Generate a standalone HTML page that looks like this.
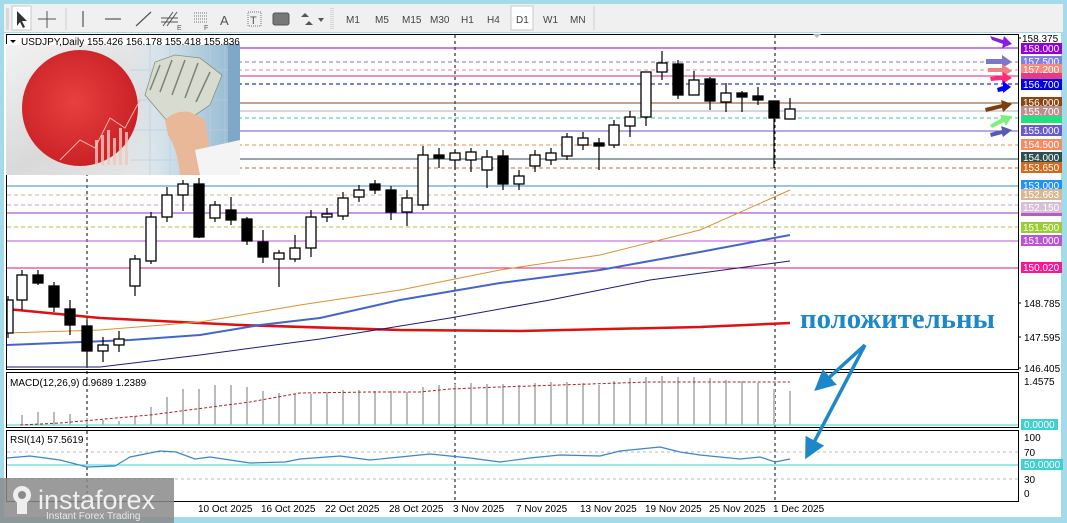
<!DOCTYPE html>
<html><head><meta charset="utf-8"><style>
html,body{margin:0;padding:0;width:1067px;height:523px;overflow:hidden;background:#a3dbe9}
svg{display:block}
text{font-family:"Liberation Sans",sans-serif}
text.ser{font-family:"Liberation Serif",serif}
</style></head><body>
<svg width="1067" height="523" viewBox="0 0 1067 523" xmlns="http://www.w3.org/2000/svg">
<defs>
<linearGradient id="flagbg" x1="0" y1="0" x2="1" y2="1"><stop offset="0" stop-color="#f2f2f2"/><stop offset="0.5" stop-color="#d9d9d9"/><stop offset="1" stop-color="#eeeeee"/></linearGradient>
<linearGradient id="rbg" x1="0" y1="0" x2="1" y2="0"><stop offset="0" stop-color="#e6eef4" stop-opacity="0"/><stop offset="0.4" stop-color="#cfe0ea"/><stop offset="1" stop-color="#8fb6cf"/></linearGradient>
<radialGradient id="red" cx="0.45" cy="0.45" r="0.6"><stop offset="0" stop-color="#e8403f"/><stop offset="1" stop-color="#c81f25"/></radialGradient>
<marker id="ah" markerWidth="6" markerHeight="6" refX="3" refY="3" orient="auto" markerUnits="strokeWidth"><path d="M0,0 L6,3 L0,6 z" fill="#1c87c9"/></marker>
</defs>
<rect x="4" y="4" width="1059" height="28" fill="#f0f0f0"/>
<rect x="6" y="8" width="3" height="22" fill="#d8d8d8"/>
<rect x="12" y="6" width="19" height="24" fill="#fff" stroke="#c8c8c8"/>
<path d="M17,11 L17,26 L20,22 L23,28 L25,27 L22,21 L27,21 z" fill="#333"/>
<path d="M47,11 V28 M38,19 H56" stroke="#555" stroke-width="1"/>
<path d="M66,8 V30" stroke="#ccc"/>
<path d="M83,11 V27" stroke="#555" stroke-width="1.2"/>
<path d="M105,19 H121" stroke="#555" stroke-width="1.2"/>
<path d="M136,26 L151,12" stroke="#555" stroke-width="1.2"/>
<path d="M163,26 L173,12 M167,26 L177,12 M161,18 H178 M161,22 H178" stroke="#555" stroke-width="1"/><text x="177" y="30" font-size="7" fill="#555">E</text>
<path d="M194,13 H208 M194,16 H208 M194,19 H208 M194,22 H208" stroke="#777" stroke-dasharray="1,1"/><text x="204" y="30" font-size="7" fill="#555">F</text>
<text x="220" y="25" font-size="13" fill="#555">A</text>
<rect x="248" y="12" width="13" height="14" fill="none" stroke="#777" stroke-dasharray="1,1"/><text x="250" y="24" font-size="11" fill="#555">T</text>
<rect x="273" y="13" width="16" height="12" rx="2" fill="#777" stroke="#555"/>
<path d="M305,13 L309,17 L301,17 z M309,21 L313,25 L305,25 z" fill="#555"/><path d="M318,18 L324,18 L321,22 z" fill="#555"/>
<path d="M331,8 V30 M333,8 V30" stroke="#bbb" stroke-dasharray="1,1"/>
<g font-size="10" fill="#444">
<text x="346" y="23">M1</text><text x="375" y="23">M5</text><text x="402" y="23">M15</text><text x="430" y="23">M30</text><text x="461" y="23">H1</text><text x="487" y="23">H4</text>
<rect x="511" y="6" width="22" height="24" fill="#fff" stroke="#c8c8c8"/><text x="516" y="23">D1</text><text x="543" y="23">W1</text><text x="570" y="23">MN</text>
</g>
<path d="M594,6 V30" stroke="#ccc"/>
<rect x="4" y="33" width="1057" height="484" fill="#fff"/>
<g fill="none" stroke="#000" stroke-width="1">
<rect x="6.5" y="34.5" width="1012" height="335"/>
<rect x="6.5" y="372.5" width="1012" height="55"/>
<rect x="6.5" y="430.5" width="1012" height="71"/>
</g>
<path d="M813,34 l4,4 l4,-4z" fill="#bbb"/>
<g stroke="#000" stroke-dasharray="3,3">
<path d="M87,35 V502 M455,35 V502 M775,35 V502"/>
</g>
<g stroke-width="1">
<path d="M7,48 H1018" stroke="#9400d3"/>
<path d="M7,62 H1018" stroke="#7b78d0" stroke-dasharray="4,3"/>
<path d="M7,70 H1018" stroke="#f08080" stroke-dasharray="4,3"/>
<path d="M7,76 H1018" stroke="#d6287a"/>
<path d="M7,84 H1018" stroke="#0000c8" stroke-dasharray="4,3"/>
<path d="M7,103 H1018" stroke="#8b4513"/>
<path d="M7,111 H1018" stroke="#bbaaaa"/>
<path d="M7,118 H1018" stroke="#2ecc8a" stroke-dasharray="4,3"/>
<path d="M7,131 H1018" stroke="#6a5acd"/>
<path d="M7,145 H1018" stroke="#e0905a" stroke-dasharray="4,3"/>
<path d="M7,159 H1018" stroke="#2f4f4f"/>
<path d="M7,168 H1018" stroke="#c07030" stroke-dasharray="4,3"/>
<path d="M7,186 H1018" stroke="#3a8ad8"/>
<path d="M7,195 H1018" stroke="#d2b48c" stroke-dasharray="4,3"/>
<path d="M7,205 H1018" stroke="#c0a0c0" stroke-dasharray="4,3"/>
<path d="M7,213 H1018" stroke="#9932cc"/>
<path d="M7,227 H1018" stroke="#b5c040" stroke-dasharray="4,3"/>
<path d="M7,241 H1018" stroke="#ba55d3"/>
<path d="M7,268 H1018" stroke="#e0157a"/>
</g>
<polyline points="7,309 100,318 240,325 400,330 520,331 700,327 790,323" fill="none" stroke="#dd1111" stroke-width="2.5"/>
<polyline points="7,333 100,330 200,322 300,305 400,290 500,270 600,255 700,230 790,190" fill="none" stroke="#e09030" stroke-width="1"/>
<polyline points="7,345 130,340 200,335 260,325 320,318 400,300 500,283 600,270 700,252 790,235" fill="none" stroke="#4466cc" stroke-width="2"/>
<polyline points="7,367 100,367 200,355 320,339 450,318 550,300 650,280 790,261" fill="none" stroke="#1a1a80" stroke-width="1"/>
<g stroke="#000" stroke-width="1.2">
<path d="M8,296V338M22,270V310M38,270V285M54,282V312M70,300V335M87,320V366M103,337V362M119,331V352M135,255V296M151,212V264M167,187V222M183,180V211M199,178V238M215,201V222M231,197V225M247,217V245M263,230V263M279,250V287M295,235V262M311,210V257M327,208V222M343,192V220M359,185V202M375,180V194M391,186V220M407,190V226M423,146V210M439,148V168M455,150V170M471,148V172M487,150V188M503,150V190M519,170V190M535,150V172M551,148V165M567,133V160M583,132V150M599,138V170M614,120V148M630,111V137M646,72V126M662,51V80M678,60V99M694,71V95M710,77V110M726,83V112M742,91V112M758,87V105M774,101V168M790,98V119"/>
</g>
<g stroke="#000" stroke-width="1.3">
<g fill="#fff">
<rect x="7" y="300" width="6" height="33"/><rect x="17" y="275" width="10" height="25"/><rect x="98" y="345" width="10" height="6"/><rect x="114" y="339" width="10" height="6"/><rect x="130" y="259" width="10" height="27"/><rect x="146" y="217" width="10" height="44"/><rect x="162" y="195" width="10" height="22"/><rect x="178" y="184" width="10" height="11"/><rect x="210" y="205" width="10" height="13"/><rect x="274" y="253" width="10" height="6"/><rect x="290" y="248" width="10" height="11"/><rect x="306" y="217" width="10" height="31"/><rect x="322" y="214" width="10" height="3"/><rect x="338" y="198" width="10" height="18"/><rect x="354" y="190" width="10" height="7"/><rect x="402" y="198" width="10" height="14"/><rect x="418" y="155" width="10" height="50"/><rect x="450" y="153" width="10" height="7"/><rect x="466" y="152" width="10" height="8"/><rect x="482" y="157" width="10" height="13"/><rect x="514" y="176" width="10" height="8"/><rect x="530" y="155" width="10" height="11"/><rect x="546" y="153" width="10" height="7"/><rect x="562" y="137" width="10" height="19"/><rect x="578" y="138" width="10" height="7"/><rect x="609" y="125" width="10" height="20"/><rect x="625" y="117" width="10" height="9"/><rect x="641" y="72" width="10" height="45"/><rect x="657" y="63" width="10" height="9"/><rect x="689" y="80" width="10" height="15"/><rect x="721" y="93" width="10" height="9"/><rect x="785" y="109" width="10" height="10"/>
</g>
<g fill="#000">
<rect x="33" y="275" width="10" height="8"/><rect x="49" y="286" width="10" height="21"/><rect x="65" y="309" width="10" height="16"/><rect x="82" y="326" width="10" height="25"/><rect x="194" y="184" width="10" height="53"/><rect x="226" y="210" width="10" height="10"/><rect x="242" y="219" width="10" height="22"/><rect x="258" y="242" width="10" height="15"/><rect x="370" y="184" width="10" height="6"/><rect x="386" y="190" width="10" height="22"/><rect x="434" y="155" width="10" height="3"/><rect x="498" y="156" width="10" height="28"/><rect x="594" y="143" width="10" height="3"/><rect x="673" y="64" width="10" height="31"/><rect x="705" y="79" width="10" height="22"/><rect x="737" y="93" width="10" height="4"/><rect x="753" y="96" width="10" height="4"/><rect x="769" y="101" width="10" height="17"/>
</g>
</g>
<g>
<rect x="6" y="44" width="234" height="131" fill="url(#flagbg)"/>
<rect x="120" y="44" width="120" height="131" fill="url(#rbg)"/>
<g stroke="#b8cfe0" stroke-width="1" opacity="0.7"><path d="M150,44V175M170,44V175M190,44V175M210,44V175M225,44V175M130,70H240M130,100H240M130,130H240M130,160H240"/></g>
<rect x="228" y="44" width="12" height="131" fill="#7fa8c8"/>
<circle cx="80" cy="108" r="58" fill="url(#red)"/>
<path d="M60,160 L80,140 L95,148 L110,118 L125,128 L140,100" stroke="#f3b0a8" fill="none" stroke-width="1"/>
<g fill="#f0c8c0" opacity="0.8"><rect x="95" y="140" width="3" height="25"/><rect x="101" y="135" width="3" height="30"/><rect x="107" y="130" width="3" height="35"/><rect x="113" y="138" width="3" height="27"/><rect x="119" y="128" width="3" height="37"/><rect x="125" y="132" width="3" height="33"/></g>
<path d="M145,95 L155,62 L175,55 L200,58 L222,75 L210,105 L188,120 L168,122 z" fill="#d8dcd0" stroke="#8a9080" stroke-width="0.8"/>
<path d="M150,90 L160,65 M160,92 L172,60 M172,95 L185,60 M185,98 L198,63 M196,102 L210,72" stroke="#7a8470" stroke-width="1.5"/>
<path d="M165,120 Q175,110 190,112 L205,120 L210,150 L200,175 L180,175 Q178,150 168,135 z" fill="#e8b898"/>
<path d="M195,150 L240,140 L240,175 L200,175z" fill="#f4f4f4"/>
</g>
<rect x="8" y="35" width="215" height="10" fill="#fff"/>
<path d="M10,40 l3,3 l3,-3z" fill="#000"/>
<text x="21" y="45" font-size="10" fill="#000">USDJPY,Daily  155.426 156.178 155.418 155.836</text>
<g>
<path d="M990,36 L1003,40 L1004,36 L1012,44 L1002,48 L1003,44 L992,40z" fill="#8a1ee0"/>
<path d="M986,59 L1002,59 L1002,55 L1012,62 L1002,68 L1002,64 L986,64z" fill="#7b78c8"/>
<path d="M988,68 L1002,68 L1002,64 L1012,71 L1002,77 L1002,72 L988,72z" fill="#f28080"/>
<path d="M990,77 L1003,76 L1003,72 L1012,78 L1002,84 L1002,80 L991,81z" fill="#ff2a7a"/>
<path d="M997,88 L1003,86 L1003,81 L1011,87 L1003,93 L1003,91 L998,92z" fill="#0000ff"/>
<path d="M985,108 L1002,104 L1001,100 L1012,104 L1003,112 L1002,108 L986,112z" fill="#7a3e10"/>
<path d="M990,125 L1002,118 L1000,115 L1012,116 L1006,126 L1004,122 L992,128z" fill="#7cf07c"/>
<path d="M990,133 L1002,130 L1001,126 L1012,130 L1003,137 L1002,134 L991,137z" fill="#5a5ab0"/>
</g>
<g font-size="10">
<text x="1022" y="42" fill="#000">158.375</text>
<rect x="1021" y="43" width="41" height="11" fill="#9400d3"/><text x="1023" y="52" fill="#fff">158.000</text>
<rect x="1021" y="56" width="41" height="11" fill="#8080e0"/><text x="1023" y="65" fill="#fff">157.500</text>
<rect x="1021" y="64" width="41" height="11" fill="#f58a80"/><text x="1023" y="73" fill="#fff">157.200</text>
<rect x="1021" y="73" width="41" height="6" fill="#e83a8a"/>
<rect x="1021" y="79" width="41" height="11" fill="#0000e0"/><text x="1023" y="88" fill="#fff">156.700</text>
<rect x="1021" y="97" width="41" height="11" fill="#8b4513"/><text x="1023" y="106" fill="#fff">156.000</text>
<rect x="1021" y="106" width="41" height="11" fill="#b89090"/><text x="1023" y="115" fill="#fff">155.700</text>
<rect x="1021" y="116" width="41" height="7" fill="#20e080"/>
<rect x="1021" y="125" width="41" height="11" fill="#6a5acd"/><text x="1023" y="134" fill="#fff">155.000</text>
<rect x="1021" y="139" width="41" height="11" fill="#f88a60"/><text x="1023" y="148" fill="#fff">154.500</text>
<rect x="1021" y="152" width="41" height="11" fill="#2f4f4f"/><text x="1023" y="161" fill="#fff">154.000</text>
<rect x="1021" y="162" width="41" height="11" fill="#d2691e"/><text x="1023" y="171" fill="#fff">153.650</text>
<rect x="1021" y="180" width="41" height="11" fill="#1e90ff"/><text x="1023" y="189" fill="#fff">153.000</text>
<rect x="1021" y="189" width="41" height="11" fill="#d8b890"/><text x="1023" y="198" fill="#fff">152.663</text>
<rect x="1021" y="205" width="41" height="11" fill="#b060c0"/>
<rect x="1021" y="202" width="41" height="11" fill="#d8bfd8"/><text x="1023" y="211" fill="#fff">152.150</text>
<rect x="1021" y="222" width="41" height="11" fill="#9acd32"/><text x="1023" y="231" fill="#fff">151.500</text>
<rect x="1021" y="235" width="41" height="11" fill="#ba55d3"/><text x="1023" y="244" fill="#fff">151.000</text>
<rect x="1021" y="262" width="41" height="11" fill="#ff1493"/><text x="1023" y="271" fill="#fff">150.020</text>
<text x="1024" y="307" fill="#000">148.785</text>
<text x="1024" y="341" fill="#000">147.595</text>
<text x="1024" y="372" fill="#000">146.405</text>
<text x="1024" y="385" fill="#000">1.4575</text>
<rect x="1021" y="419" width="37" height="11" fill="#40d0d0"/><text x="1024" y="428" fill="#fff">0.0000</text>
<text x="1024" y="441" fill="#000">100</text>
<text x="1024" y="456" fill="#000">70</text>
<rect x="1021" y="459" width="42" height="11" fill="#40d0d0"/><text x="1024" y="468" fill="#fff">50.0000</text>
<text x="1024" y="483" fill="#000">30</text>
<text x="1024" y="497" fill="#000">0</text>
</g>
<path d="M1018,38h3M1018,303h3M1018,337h3M1018,368h3" stroke="#000"/>
<text x="10" y="386" font-size="10" fill="#000">MACD(12,26,9) 0.9689 1.2389</text>
<path d="M7,425H1018" stroke="#40d0d0"/>
<g stroke="#bbb" stroke-width="2">
<path d="M22,425V415M38,425V412M54,425V412M70,425V414M87,425V418M103,425V420M119,425V421M135,425V416M151,425V407M167,425V397M183,425V389M199,425V389M215,425V385M231,425V385M247,425V387M263,425V391M279,425V393M295,425V394M311,425V394M327,425V392M343,425V390M359,425V390M375,425V391M391,425V391M407,425V392M423,425V387M439,425V385M455,425V384M471,425V383M487,425V384M503,425V384M519,425V385M535,425V383M551,425V382M567,425V382M583,425V383M599,425V385M614,425V381M630,425V378M646,425V377M662,425V376M678,425V377M694,425V377M710,425V378M726,425V380M742,425V381M758,425V383M774,425V389M790,425V391"/>
</g>
<polyline points="20,425 60,423 150,415 250,402 300,393 370,392 420,392 450,389 500,387 560,385 650,382 790,382" fill="none" stroke="#b22222" stroke-dasharray="3,2"/>
<text x="10" y="443" font-size="10" fill="#000">RSI(14) 57.5619</text>
<g stroke="#bbb" stroke-dasharray="3,3"><path d="M7,452H1018M7,479H1018"/></g>
<path d="M7,465H1018" stroke="#40d0d0"/>
<polyline points="7,458 30,456 60,460 87,467 115,466 130,457 160,451 176,452 195,459 210,457 250,463 285,462 300,459 340,456 370,460 400,457 430,454 470,458 500,462 530,458 560,455 600,456 620,451 640,449 660,447 680,452 700,455 740,459 760,457 775,462 790,459" fill="none" stroke="#3a86c8" stroke-width="1.2"/>
<g font-size="10" fill="#000">
<text x="198" y="512">10 Oct 2025</text><text x="261" y="512">16 Oct 2025</text><text x="325" y="512">22 Oct 2025</text><text x="389" y="512">28 Oct 2025</text><text x="453" y="512">3 Nov 2025</text><text x="516" y="512">7 Nov 2025</text><text x="580" y="512">13 Nov 2025</text><text x="645" y="512">19 Nov 2025</text><text x="709" y="512">25 Nov 2025</text><text x="773" y="512">1 Dec 2025</text>
</g>
<text class="ser" x="800" y="328" font-weight="bold" font-size="28" fill="#1c87c9" textLength="195" lengthAdjust="spacingAndGlyphs">положительны</text>
<g stroke="#1c87c9" stroke-width="3.5" fill="none" marker-end="url(#ah)">
<path d="M865,345 L822,384"/>
<path d="M865,345 L810,450"/>
</g>
<rect x="0" y="478" width="174" height="45" fill="#8a8a8a" opacity="0.85"/>
<g fill="#eee">
<circle cx="22" cy="495" r="9"/><rect x="17" y="500" width="10" height="14"/>
</g>
<circle cx="22" cy="495" r="4" fill="#8a8a8a"/>
<text x="38" y="509" font-size="27" fill="#f0f0f0">instaforex</text>
<text x="46" y="519" font-size="10" fill="#e8e8e8">Instant Forex Trading</text>
</svg>
</body></html>
